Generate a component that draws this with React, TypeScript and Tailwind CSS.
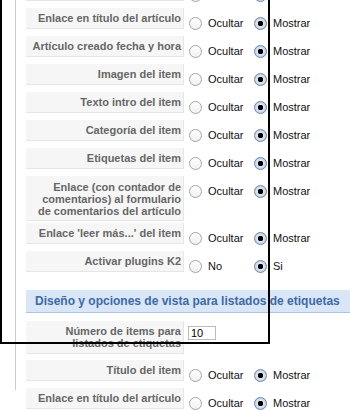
// K2 parameter sheet: label column on the left, radio choices on the right.
// The page is scrolled a bit, so the first row only peeks in at the top.

type Row = {
  label: string[];
  kind: "radio" | "yesno" | "input" | "peek";
  value?: string;
  space?: string; // spacing class below the row
  pad?: string; // padding of the label cell
};

const before: Row[] = [
  { label: [], kind: "peek" },
  { label: ["Enlace en título del artículo"], kind: "radio" },
  { label: ["Artículo creado fecha y hora"], kind: "radio" },
  { label: ["Imagen del item"], kind: "radio" },
  { label: ["Texto intro del item"], kind: "radio" },
  { label: ["Categoría del item"], kind: "radio" },
  { label: ["Etiquetas del item"], kind: "radio" },
  {
    label: [
      "Enlace (con contador de",
      "comentarios) al formulario",
      "de comentarios del artículo",
    ],
    kind: "radio",
    space: "mb-[2px]",
    pad: "pt-[5px] pb-[3px]",
  },
  { label: ["Enlace 'leer más...' del item"], kind: "radio" },
  { label: ["Activar plugins K2"], kind: "yesno" },
];

const after: Row[] = [
  {
    label: ["Número de items para", "listados de etiquetas"],
    kind: "input",
    value: "10",
    space: "mb-[6px]",
  },
  { label: ["Título del item"], kind: "radio" },
  { label: ["Enlace en título del artículo"], kind: "radio" },
];

export default function App() {
  return (
    <div className="relative h-[410px] overflow-hidden bg-white font-['Liberation_Sans',Arial,sans-serif]">
      <div className="ml-[15px] h-full border-l border-[#cccccc] pl-[10px]">
        <div className="-mt-[20px] flex flex-col">
          {before.map((r, i) => (
            <ParamRow key={i} row={r} />
          ))}

          <div className="mb-[8px] mt-[11px] border-b border-[#aac3e3] bg-[#d8e6f8] py-[5px] pl-[9px] text-[12px] font-bold leading-[12px] text-[#3e6aa3] whitespace-nowrap">
            Diseño y opciones de vista para listados de etiquetas
          </div>

          {after.map((r, i) => (
            <ParamRow key={i} row={r} />
          ))}
        </div>
      </div>

      {/* black selection frame drawn over the page */}
      <div className="pointer-events-none absolute left-0 top-[-10px] h-[354px] w-[270px] border-2 border-black" />
    </div>
  );
}

function ParamRow({ row }: { row: Row }) {
  const peek = row.kind === "peek";
  return (
    <div className={`flex items-start ${row.space ?? "mb-[7px]"}`}>
      <div
        className={`min-h-[21px] w-[158px] shrink-0 border-b border-r border-[#e6e6e6] bg-[#f6f6f6] pr-[2px] text-right text-[11px] font-bold leading-[12px] text-[#666666] whitespace-nowrap ${row.pad ?? "py-[4px]"}`}
      >
        {row.label.map((l, i) => (
          <div key={i}>{l}</div>
        ))}
      </div>
      {row.kind === "input" ? (
        <div className="pl-[4px] pt-[5px]">
          <div className="flex h-[14px] w-[28px] items-center border border-[#bbbbbb] pl-[2px] text-[11px] leading-none text-black">
            {row.value}
          </div>
        </div>
      ) : (
        <div className="flex h-[21px] items-start pl-[5px] pt-[9px]">
          <Option text={peek ? "" : row.kind === "yesno" ? "No" : "Ocultar"} />
          <Option text={peek ? "" : row.kind === "yesno" ? "Si" : "Mostrar"} checked />
        </div>
      )}
    </div>
  );
}

function Option({ text, checked }: { text: string; checked?: boolean }) {
  return (
    <div className="flex w-[65px] items-center gap-[6px]">
      {checked ? (
        <span className="h-[13px] w-[13px] shrink-0 rounded-full border border-[#6f86a6] bg-[radial-gradient(circle,#000_0_2.5px,#dfe8f3_3px,#aebfd6_100%)]" />
      ) : (
        <span className="h-[13px] w-[13px] shrink-0 rounded-full border border-[#a4a4a4] bg-[linear-gradient(#ffffff,#f0f0f0)]" />
      )}
      {text && (
        <span className="text-[11px] leading-[13px] text-[#111111] whitespace-nowrap">{text}</span>
      )}
    </div>
  );
}
